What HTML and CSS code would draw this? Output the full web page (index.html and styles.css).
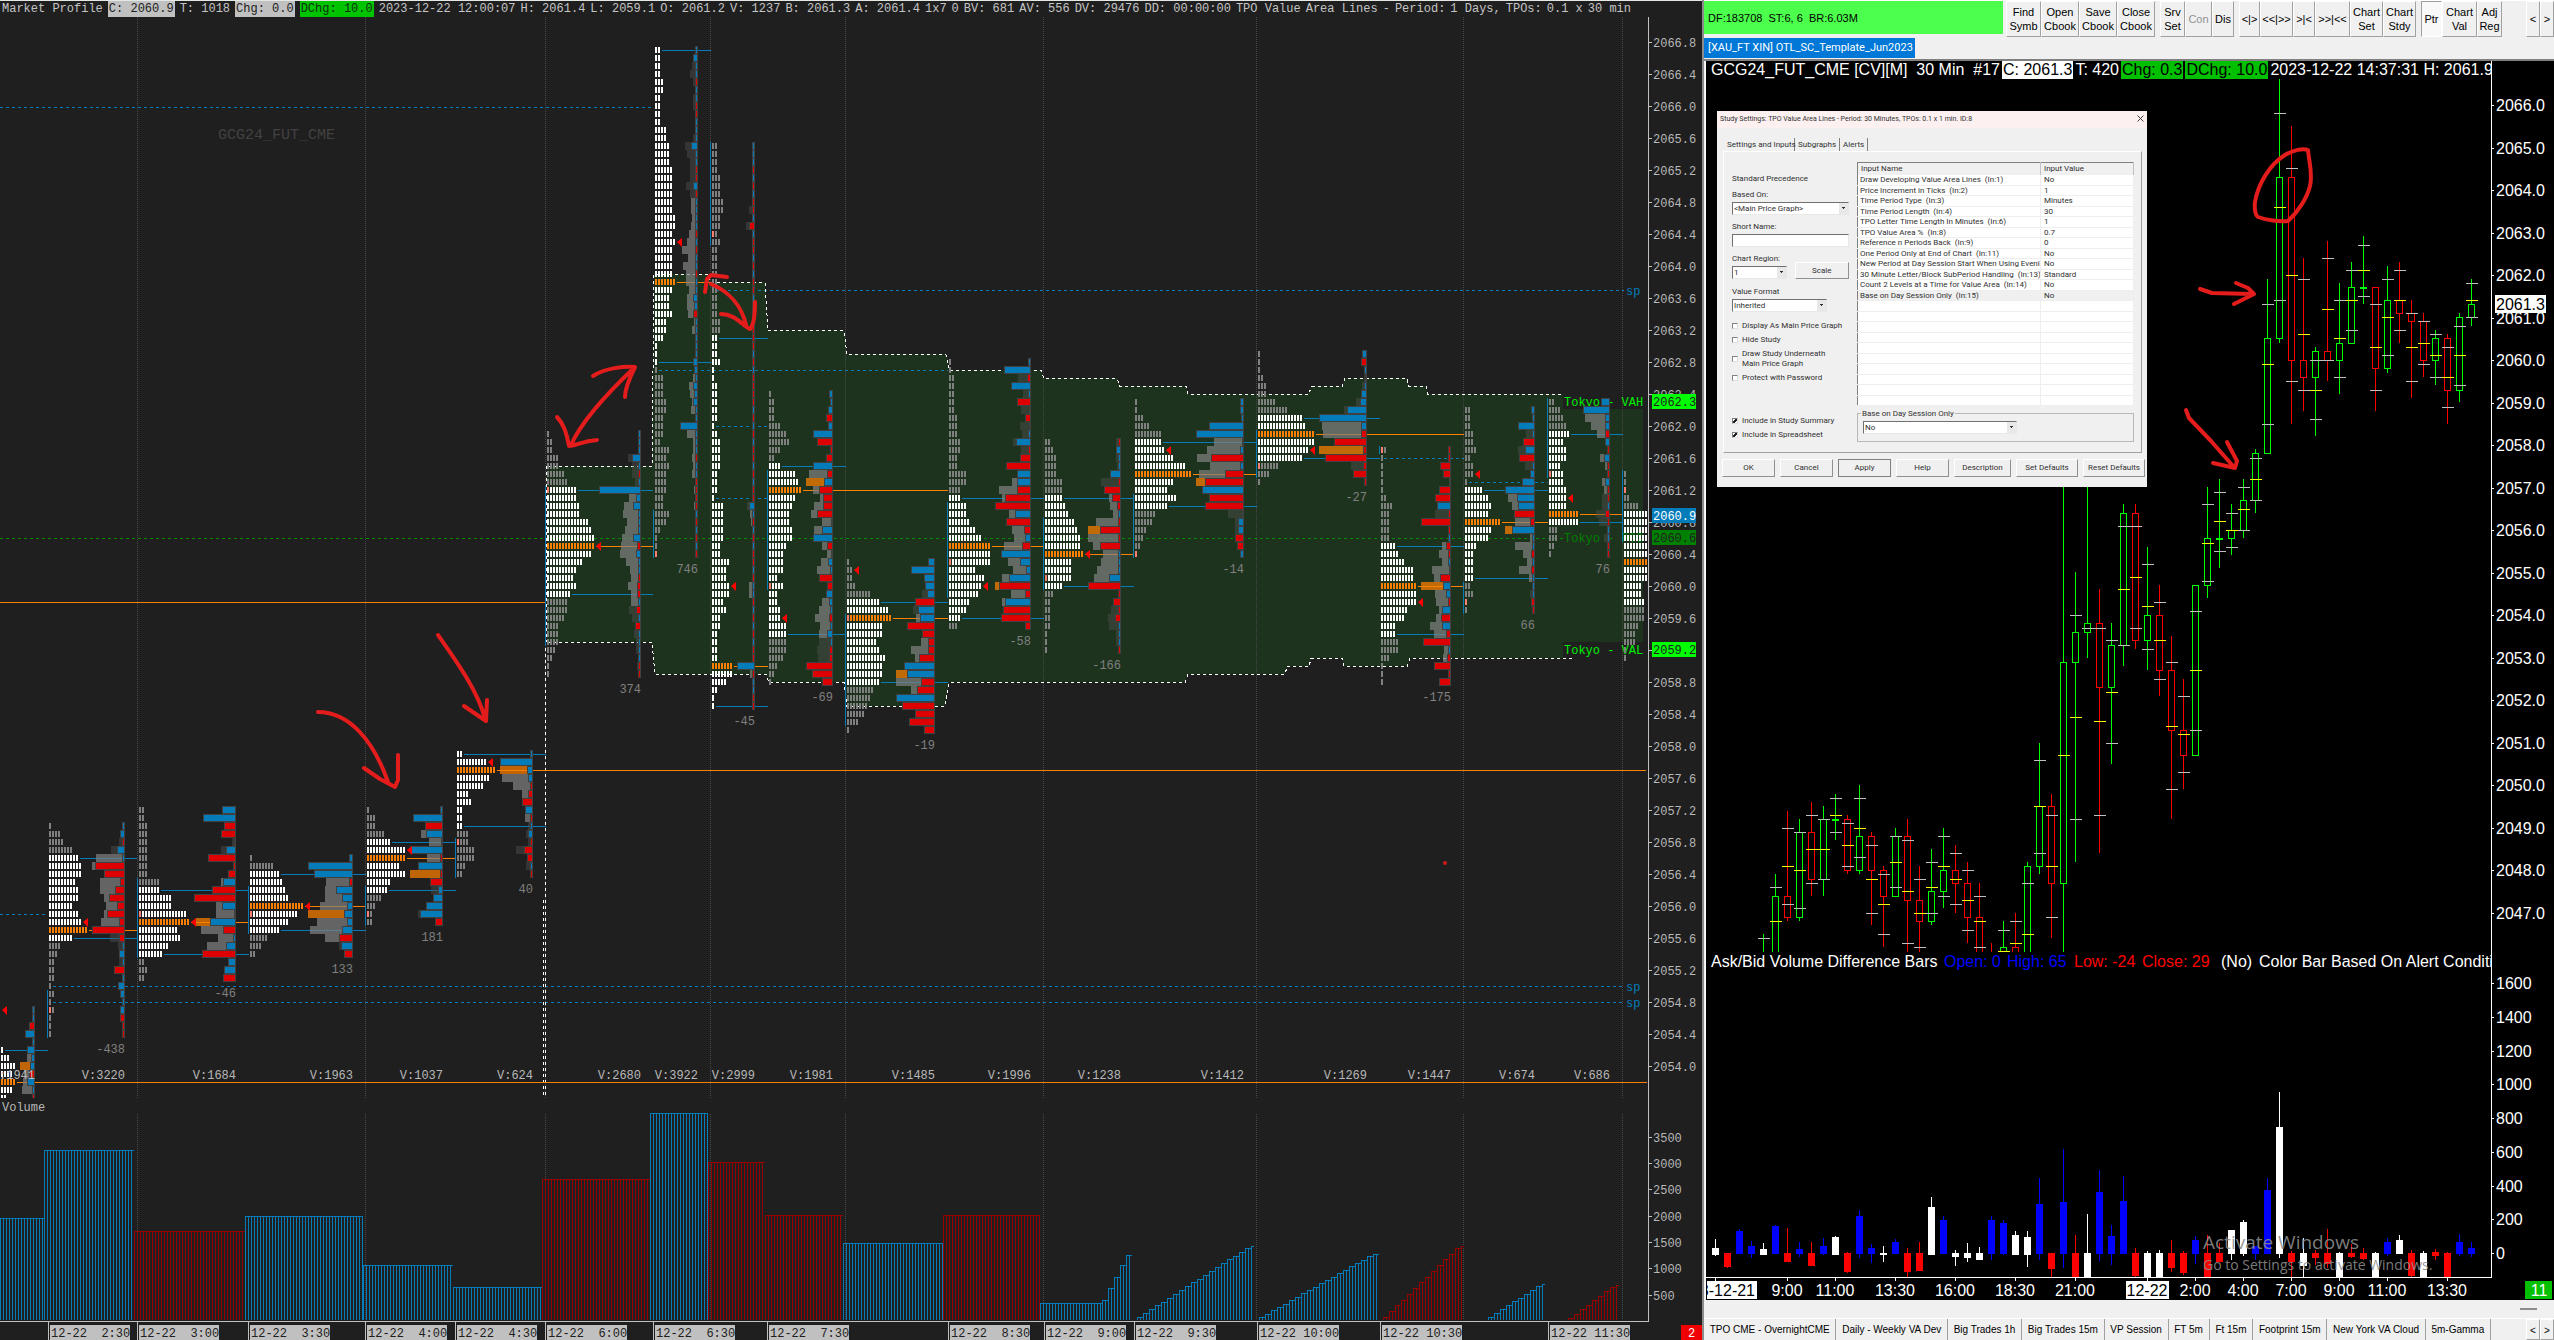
FILE: index.html
```html
<!DOCTYPE html>
<html lang="en">
<head>
<meta charset="utf-8">
<title>Market Profile - GCG24_FUT_CME</title>
<link rel="stylesheet" href="styles.css">
</head>
<body>
<main class="workspace">
  <section class="profile-pane">
    <header class="profile-head">
      <span>Market Profile</span>
      <span class="chip silver">C: 2060.9</span>
      <span>T: 1018</span>
      <span class="chip silver">Chg: 0.0</span>
      <span class="chip green">DChg: 10.0</span>
      <span>2023-12-22 12:00:07</span>
      <span>H: 2061.4</span>
      <span>L: 2059.1</span>
      <span>O: 2061.2</span>
      <span>V: 1237</span>
      <span>B: 2061.3</span>
      <span>A: 2061.4</span>
      <span>1x7</span>
      <span>0</span>
      <span>BV: 681</span>
      <span>AV: 556</span>
      <span>DV: 29476</span>
      <span>DD: 00:00:00</span>
      <span>TPO Value</span>
      <span>Area Lines</span>
      <span>-</span>
      <span>Period:</span>
      <span>1 Days,</span>
      <span>TPOs:</span>
      <span>0.1 x</span>
      <span>30 min</span>
    </header>
    <svg class="profile-chart" id="profile" viewBox="0 17 1702 1323" preserveAspectRatio="xMinYMin meet"></svg>
  </section>

  <section class="side-pane">
    <div class="toolbar">
      <div class="feed">DF:183708&nbsp; ST:6, 6&nbsp; BR:6.03M</div>
      <div class="group">
        <button class="w35">Find<br>Symb</button><button class="w38">Open<br>Cbook</button><button class="w38">Save<br>Cbook</button><button class="w38">Close<br>Cbook</button>
      </div>
      <div class="group">
        <button class="w25">Srv<br>Set</button><button class="w27" disabled>Con</button><button class="w22">Dis</button>
      </div>
      <div class="group">
        <button class="w21">&lt;|&gt;</button><button class="w33">&lt;&lt;|&gt;&gt;</button><button class="w22">&gt;|&lt;</button><button class="w35">&gt;&gt;|&lt;&lt;</button><button class="w33">Chart<br>Set</button><button class="w33">Chart<br>Stdy</button>
      </div>
      <div class="group">
        <button class="w21 pressed">Ptr</button><button class="w35">Chart<br>Val</button><button class="w25">Adj<br>Reg</button>
      </div>
      <div class="group end">
        <button class="w14">&lt;</button><button class="w14">&gt;</button>
      </div>
    </div>
    <div class="window-tabs"><a href="#chart" class="window-tab">[XAU_FT XIN] OTL_SC_Template_Jun2023</a></div>

    <div class="candle-wrap" id="chart">
      <header class="candle-head">
        <span>GCG24_FUT_CME [CV][M]  30 Min  #17</span>
        <span class="chip white">C: 2061.3</span>
        <span>T: 420</span>
        <span class="chip lime">Chg: 0.3</span>
        <span class="chip lime">DChg: 10.0</span>
        <span>2023-12-22 14:37:31 H: 2061.9</span>
      </header>
      <svg class="candle-chart" id="candles" viewBox="1706 79 848 1221" preserveAspectRatio="xMinYMin meet"></svg>

      <form class="dialog">
        <div class="dialog-title"><span>Study Settings: TPO Value Area Lines - Period: 30 Minutes, TPOs: 0.1 x 1 min. ID:8</span>
          <button type="button" class="close" aria-label="Close"><svg viewBox="0 0 7 7"><path d="M.5 .5l6 6m0-6l-6 6"/></svg></button></div>
        <nav class="dialog-tabs"><a href="#inputs" class="on">Settings and Inputs</a><a href="#sub">Subgraphs</a><a href="#alerts">Alerts</a></nav>
        <div class="dialog-page">
          <div class="options">
            <p>Standard Precedence</p>
            <label for="based">Based On:</label>
            <select id="based"><option>&lt;Main Price Graph&gt;</option></select>
            <label for="short">Short Name:</label>
            <input type="text" id="short">
            <label for="region">Chart Region:</label>
            <div class="pair"><select id="region"><option>1</option></select><button type="button">Scale</button></div>
            <label for="format">Value Format</label>
            <select id="format" class="mid"><option>Inherited</option></select>
            <label class="check"><input type="checkbox">Display As Main Price Graph</label>
            <label class="check"><input type="checkbox">Hide Study</label>
            <label class="check two"><input type="checkbox"><span>Draw Study Underneath<br>Main Price Graph</span></label>
            <label class="check"><input type="checkbox">Protect with Password</label>
            <div class="push"></div>
            <label class="check"><input type="checkbox" checked>Include in Study Summary</label>
            <label class="check"><input type="checkbox" checked>Include in Spreadsheet</label>
          </div>
          <div class="inputs">
            <table>
              <thead><tr><th>Input Name</th><th>Input Value</th></tr></thead>
              <tbody id="inputs">
                <tr><td>Draw Developing Value Area Lines &nbsp;(In:1)</td><td>No</td></tr>
                <tr><td>Price Increment in Ticks &nbsp;(In:2)</td><td>1</td></tr>
                <tr><td>Time Period Type &nbsp;(In:3)</td><td>Minutes</td></tr>
                <tr><td>Time Period Length &nbsp;(In:4)</td><td>30</td></tr>
                <tr><td>TPO Letter Time Length In Minutes &nbsp;(In:6)</td><td>1</td></tr>
                <tr><td>TPO Value Area % &nbsp;(In:8)</td><td>0.7</td></tr>
                <tr><td>Reference n Periods Back &nbsp;(In:9)</td><td>0</td></tr>
                <tr><td>One Period Only at End of Chart &nbsp;(In:11)</td><td>No</td></tr>
                <tr><td>New Period at Day Session Start When Using Eveni...</td><td>No</td></tr>
                <tr><td>30 Minute Letter/Block SubPeriod Handling &nbsp;(In:13)</td><td>Standard</td></tr>
                <tr><td>Count 2 Levels at a Time for Value Area &nbsp;(In:14)</td><td>No</td></tr>
                <tr class="sel"><td>Base on Day Session Only &nbsp;(In:15)</td><td>No</td></tr>
                <tr><td></td><td></td></tr><tr><td></td><td></td></tr><tr><td></td><td></td></tr><tr><td></td><td></td></tr><tr><td></td><td></td></tr>
                <tr><td></td><td></td></tr><tr><td></td><td></td></tr><tr><td></td><td></td></tr><tr><td></td><td></td></tr><tr><td></td><td></td></tr>
              </tbody>
            </table>
            <fieldset>
              <legend><label for="base">Base on Day Session Only</label></legend>
              <select id="base"><option>No</option></select>
            </fieldset>
          </div>
        </div>
        <div class="dialog-buttons">
          <button type="button">OK</button><button type="button">Cancel</button><button type="button" class="default">Apply</button><button type="button">Help</button><button type="button" class="wide">Description</button><button type="button" class="wider">Set Defaults</button><button type="button" class="wider">Reset Defaults</button>
        </div>
      </form>
    </div>

    <div class="strip"><span></span></div>
    <nav class="books">
      <a href="#b1">TPO CME - OvernightCME</a><a href="#b2">Daily - Weekly VA Dev</a><a href="#b3">Big Trades 1h</a><a href="#b4">Big Trades 15m</a><a href="#b5">VP Session</a><a href="#b6">FT 5m</a><a href="#b7">Ft 15m</a><a href="#b8">Footprint 15m</a><a href="#b9">New York VA Cloud</a><a href="#b10">5m-Gamma</a>
      <div class="scrollers"><button>&lt;</button><button>&gt;</button></div>
    </nav>
  </section>
</main>
<script src="charts.js"></script>
</body>
</html>
```
FILE: styles.css
```css
* { box-sizing: border-box; }
body { margin: 0; background: #1f1f1f; }
button, input, select { font: inherit; color: inherit; margin: 0; border-radius: 0; }
a { color: inherit; text-decoration: none; }

.workspace { display: grid; grid-template-columns: 1702fr 852fr; min-height: 100vh; }
.profile-pane { background: #1f1f1f; border-top: 1px solid #e4e8e4; min-width: 0; overflow: hidden; font: 12px "Liberation Mono", monospace; }
.profile-head { display: flex; gap: 5px; height: 16px; padding-left: 2px; line-height: 16px; color: #c4c4c4; white-space: nowrap; }
.profile-head span, .candle-head span { flex: none; }
.chip { padding: 0 1px; }
.chip.silver { background: #c0c0c0; color: #202020; }
.chip.green { background: #00c400; color: #103010; }
.profile-chart { display: block; width: 100%; height: auto; }
.profile-chart text { font: 12px "Liberation Mono", monospace; fill: #b8b8b8; white-space: pre; }
.profile-chart .dim { fill: #808080; }
.profile-chart .mark { font-size: 15px; fill: #424242; }
.profile-chart .sp { fill: #047cba; }
.profile-chart .lime { fill: #00f000; }
.profile-chart .forest { fill: #008000; }
.profile-chart .ink { fill: #202020; }
.profile-chart .snow { fill: #ffffff; }
.sketch { fill: none; stroke: #e41c1c; stroke-width: 4; stroke-linecap: round; stroke-linejoin: round; }
.crisp { shape-rendering: crispEdges; }

.side-pane { display: flex; flex-direction: column; min-width: 0; background: #f0f0f0; border-left: 2px solid #8c8c8c; font: 11px "Liberation Sans", sans-serif; color: #000; }
.toolbar { display: flex; height: 37px; border-top: 1px solid #fff; }
.feed { width: 299px; height: 33px; background: #4cff4c; margin-right: 3px; padding-left: 4px; line-height: 34px; font-size: 11px; white-space: nowrap; flex-shrink: 1; }
.group { display: flex; margin-right: 5px; flex: none; }
.group.end { margin: 0 0 0 auto; }
.group button { padding: 0; border: 1px solid; border-color: #fff #a0a0a0 #a0a0a0 #fff; background: #f0f0f0; line-height: 14px; }
.group button:disabled { color: #909090; }
.group .pressed { background: #f8f8f8; border-color: #a0a0a0 #fff #fff #a0a0a0; }
.w14 { width: 14px; } .w21 { width: 21px; } .w22 { width: 22px; } .w25 { width: 25px; } .w27 { width: 27px; }
.w33 { width: 33px; } .w35 { width: 35px; } .w38 { width: 38px; }
.window-tabs { height: 24px; border-bottom: 2px solid #808080; }
.window-tab { display: block; width: 211px; height: 20px; margin-top: 1px; padding-left: 4px; line-height: 20px; font-family: Roboto, sans-serif; background: #0078d7; color: #fff; white-space: nowrap; }

.candle-wrap { position: relative; flex: 1; margin-left: 1px; background: #000; overflow: hidden; border-left: 1px solid #fff; }
.candle-head { display: flex; gap: 2px; height: 18px; margin-right: 62px; padding-left: 5px; border-right: 1px solid #fff; line-height: 18px; font-size: 16px; color: #fff; white-space: pre; overflow: hidden; }
.chip.white { background: #fff; color: #000; }
.chip.lime { background: #00c000; color: #000; }
.candle-chart { display: block; width: 100%; height: auto; }
.candle-chart text { font: 16px "Liberation Sans", sans-serif; fill: #fff; white-space: pre; }
.candle-chart .black { fill: #000; }
.candle-chart .red { fill: #f00; }
.candle-chart .blue { fill: #00f; }
.candle-chart .activate { font: 19px "Open Sans", sans-serif; fill: #8c8c8c; fill-opacity: .9; }
.candle-chart .activate.small { font-size: 14px; }

.strip { height: 18px; padding: 8px 17px 0 0; }
.strip span { display: block; width: 17px; height: 2px; margin-left: auto; background: #8c8c8c; }
.books { display: flex; height: 22px; font-size: 10px; line-height: 22px; white-space: nowrap; border-top: 1px solid #fff; }
.books a { padding: 0 4px; border-right: 1px solid #a0a0a0; flex: 1 1 auto; text-align: center; }
.scrollers { display: flex; margin-left: 35px; }
.scrollers button { width: 14px; padding: 0; border: 1px solid; border-color: #fff #a0a0a0 #a0a0a0 #fff; background: #f0f0f0; }

.dialog { position: absolute; left: 11px; top: 50px; width: 430px; height: 376px; background: #f0f0f0; color: #303030; font: 8px/10px Roboto, sans-serif; display: flex; flex-direction: column; }
.dialog-title { display: flex; justify-content: space-between; height: 17px; padding: 0 3px; line-height: 16px; background: #fcf0f0; font-size: 7px; }
.close { border: 0; background: none; padding: 0; width: 7px; height: 14px; }
.close svg { display: block; width: 7px; height: 7px; stroke: #404040; fill: none; }
.dialog-tabs { display: flex; height: 23px; margin: 0 6px; padding-top: 10px; line-height: 14px; }
.dialog-tabs a { padding: 0 3px; border-right: 1px solid #808080; }
.dialog-tabs .on { width: 72px; padding-left: 4px; white-space: nowrap; }
.dialog-page { display: flex; height: 302px; margin: 0 5px 0 6px; padding: 10px 8px; border: 1px solid; border-color: #fff #a0a0a0 #a0a0a0 #fff; gap: 8px; }
.options { display: flex; flex-direction: column; width: 117px; white-space: nowrap; }
.options p { margin: 12px 0 6px; }
.options > label { height: 12px; }
.options > select, .options > input { margin-bottom: 7px; }
.dialog select, .dialog input[type="text"] { display: block; width: 117px; height: 13px; padding: 0 1px; border: 1px solid; border-color: #707070 #e8e8e8 #e8e8e8 #707070; background: #fff; }
.dialog select { appearance: none; background: linear-gradient(#303030, #303030) right 3px top 4px / 3px 1px no-repeat, linear-gradient(#303030, #303030) right 4px top 5px / 1px 1px no-repeat, linear-gradient(#e8e8e8, #e8e8e8) right 0 top 0 / 9px 11px no-repeat, #fff; }
.pair { display: flex; gap: 8px; height: 19px; margin-bottom: 2px; }
.dialog .pair select { width: 55px; }
.pair button { width: 55px; height: 17px; margin-top: -4px; }
.dialog .mid { width: 95px; }
.dialog button:not(.close) { padding: 0; border: 1px solid; border-color: #fff #909090 #909090 #fff; background: #f0f0f0; }
.options > .check { display: flex; gap: 4px; align-items: center; height: 14px; flex: none; }
.options > .two { height: 24px; }
.check input { appearance: none; width: 6px; height: 6px; border: 1px solid; border-color: #808080 #e0e0e0 #e0e0e0 #808080; background: #fff; flex: none; }
.check input:checked { background: linear-gradient(135deg, #fff 35%, #202020 35%, #202020 75%, #fff 75%); }
.push { flex: 1; }
.inputs { width: 277px; display: flex; flex-direction: column; justify-content: space-between; }
.dialog table { width: 277px; height: 244px; border-collapse: collapse; table-layout: fixed; background: #fff; border: 1px solid; border-color: #808080 #e0e0e0 #e0e0e0 #808080; }
.dialog th { width: 183px; height: 12px; padding: 0 3px; text-align: left; font-weight: normal; background: #f0f0f0; border-right: 1px solid #c0c0c0; }
.dialog th + th { width: auto; }
.dialog td { height: 10px; padding: 0 2px; line-height: 9px; white-space: nowrap; border-right: 1px solid #eee; border-bottom: 1px solid #eee; overflow: hidden; }
.dialog td + td { padding-left: 3px; }
.dialog .sel td { background: #f0f0f0; }
.dialog fieldset { margin: 0; height: 33px; padding: 3px 5px 0; border: 1px solid #b8b8b8; }
.dialog legend { padding: 0 1px; line-height: 9px; margin-left: -2px; }
.dialog fieldset select { width: 154px; }
.dialog-buttons { display: flex; gap: 5px; padding: 6px 2px 0 5px; }
.dialog-buttons button { width: 53px; height: 18px; white-space: nowrap; }
.dialog-buttons .wide { width: 57px; }
.dialog-buttons .wider { width: 62px; }
.dialog .dialog-buttons .default { border-color: #808080; }
```
FILE: charts.js
```js
// ---- helpers -------------------------------------------------------------
const rect = (x, y, w, h, fill) => `<rect x="${x}" y="${y}" width="${w}" height="${h}" fill="${fill}"/>`;
const line = (x1, y1, x2, y2, stroke, dash) =>
  `<path d="M${x1} ${y1}L${x2} ${y2}" stroke="${stroke}" fill="none"${dash ? ` stroke-dasharray="${dash}"` : ''}/>`;
const hline = (x1, x2, y, stroke, dash) => line(x1, y + .5, x2, y + .5, stroke, dash);
const vline = (x, y1, y2, stroke, dash) => line(x + .5, y1, x + .5, y2, stroke, dash);
const text = (x, y, s, cls = '', anchor = 'start') =>
  `<text x="${x}" y="${y}" class="${cls}" text-anchor="${anchor}">${s}</text>`;

const BLUE = '#047cba', RED = '#de0000', ORANGE = '#ff8000', FRAME = '#404040';

// ---- market profile ------------------------------------------------------
// One row is 0.1 of price, 8px high; row 0 is 2066.8.
const rowY = r => 42 + 8 * r;

// rows: "tpoCount,volumeWidth[d=outside value|o=poc],delta" from the top row down
const profiles = [
 {x:1,r0:121,right:35,va:[126,140],poc:130,tri:121,triX:2,end:48,pocEnd:1648,vol:'1941',
  rows:'0,0,3 0,0,3 0,0,-6 0,0,10 0,0,3 1,0,8 3,8,4 5,15o,5 4,11,-6 5,12,8 4,13,3 2,0,-3'},
 {x:49,r0:98,right:125,va:[102,112],poc:111,tri:110,open:121,ib:[119,124],end:137,vol:'3220',delta:'-438',
  rows:'1,0,3 4,0,5 5,6d,-3 8,14d,8 10,29,3 11,33,-30 11,0,-21 9,25,-5 10,25,-10 10,21,-16 8,19,-8 10,21,-18 11,24,-6 13,0,-33 8,15d,-6 4,7d,3 3,0,6 2,6d,3 2,0,-11 2,0,3 1,0,7 2,0,5 1,0,3 2,0,5 1,0,-5 1,0,-3 1,0,-3'},
 {x:139,r0:96,right:236,va:[106,114],poc:110,tri:110,open:109,ib:[105,114],end:249,vol:'1684',delta:'-46',
  rows:'2,0,14 2,0,33 3,0,-12 3,0,-15 3,4d,0 3,15d,10 3,0,-28 3,0,-3 3,0,-8 7,15,13 7,0,-24 11,0,-42 11,20,14 16,20,0 17,40o,26 13,35,-13 14,18,3 10,29,10 8,0,-34 2,0,8 3,0,12 2,0,-13'},
 {x:250,r0:102,right:353,va:[104,111],poc:108,tri:108,open:109,ib:[106,111],end:366,vol:'1963',delta:'133',
  rows:'1,0,4 8,0,45 10,0,39 11,27,-4 12,28,17 13,28,11 18,33,6 16,45o,9 13,36,6 10,43,11 6,28,-14 4,14d,12 2,0,-9'},
 {x:367,r0:96,right:443,va:[100,106],poc:102,tri:101,open:109,ib:[106,110],end:456,vol:'1037',delta:'181',
  rows:'1,0,3 3,0,30 3,0,-18 6,22,17 8,14,0 13,0,33 13,16,-3 11,0,25 13,33o,-3 8,0,-13 7,12d,5 5,0,10 3,0,17 2,25d,23 2,0,-8'},
 {x:457,r0:89,right:533,va:[89,98],poc:91,tri:90,open:100,ib:[100,104],end:546,pocEnd:1646,vol:'624',delta:'40',
  rows:'2,0,3 10,0,33 13,33o,6 11,31,5 9,20,-3 4,11,-5 5,0,-11 2,0,8 2,8,-3 2,5d,3 4,7d,5 4,5d,-3 6,17d,-9 6,0,-6 3,7d,3 2,0,-3'},
 {x:547,r0:49,right:641,va:[56,69],poc:63,tri:63,open:56,ib:[56,75],end:653,vol:'2680',delta:'374',
  rows:'1,0,3 2,0,3 2,0,3 4,13d,9 4,9d,3 6,9d,-3 7,6d,3 10,0,42 10,12,5 11,17,8 11,18,3 14,14,3 15,16,3 16,19,8 16,20,-4 15,21,5 12,15,3 10,11,3 9,10,-3 10,13,-4 8,10,-4 7,10,3 7,12d,-5 6,9d,3 4,0,-6 4,7d,3 4,5d,3 3,5d,3 2,0,3 1,4d,-3 1,0,-3'},
 {x:655,r0:1,right:698,va:[1,40],poc:30,tri:25,open:64,ib:[59,64],end:711,vol:'3922',delta:'746',
  rows:'2,0,3 2,0,5 2,6d,3 2,8d,3 3,5d,-3 3,0,3 2,5d,3 2,5d,-3 2,0,-3 2,0,3 4,0,3 4,5d,3 5,13d,7 5,11d,3 5,8d,3 6,8d,-3 6,8d,-3 6,12d,5 6,8d,-3 6,7,3 6,7,3 7,6,3 7,7,3 6,9,-3 7,11,3 6,16,-3 6,10,3 6,15,3 6,12,-3 7,12,3 6,9,3 5,11,5 5,11,4 6,10,-5 4,4,3 4,6,3 3,0,3 1,0,3 1,0,3 1,0,5 1,0,4 3,5,3 3,9,5 3,8,4 4,6,5 4,7,3 3,0,3 3,0,18 3,11,3 2,5,3 5,5,3 4,6,-3 5,5,3 4,6,3 4,0,-3 4,4,-3 3,0,-3 3,4,-3 5,0,3 4,0,-3 2,0,3 1,0,-3 1,0,3 1,0,-3'},
 {x:712,r0:13,right:755,va:[37,83],poc:78,tri:68,open:24,ib:[13,25],end:768,vol:'2999',delta:'-45',
  rows:'2,0,3 2,0,3 2,0,3 2,0,-3 3,0,3 3,0,-3 3,0,3 4,0,-3 4,6d,-3 3,0,3 3,9d,-6 2,0,3 3,0,-3 2,0,-3 2,0,3 2,0,-3 2,0,3 2,0,-3 2,0,-3 2,0,3 2,0,-3 2,0,3 3,0,-3 3,0,-3 2,0,-3 2,0,-3 2,0,3 3,0,-3 1,0,3 1,0,-3 2,0,-3 2,0,-3 2,0,-3 2,0,3 2,0,-3 1,0,3 2,0,-3 3,0,3 3,0,-3 3,0,-3 3,0,3 2,0,-3 2,0,3 2,0,-3 1,0,-3 4,8d,6 4,5,3 4,4,-3 4,0,3 4,0,-3 3,0,3 3,0,-3 6,0,-3 5,0,3 5,0,-3 6,6,3 6,6,3 4,0,-3 5,0,3 3,0,-3 3,0,3 2,0,-3 2,0,3 2,0,-3 2,0,-3 7,0,18 7,5,-3 5,0,3 2,0,3 1,0,-3 1,0,-3'},
 {x:769,r0:44,right:833,va:[53,74],poc:56,tri:72,open:68,ib:[54,68],end:846,pocEnd:948,vol:'1981',delta:'-69',
  rows:'1,0,4 2,0,3 2,0,5 2,0,-7 4,0,5 6,0,20 7,0,-16 4,0,-3 2,0,-7 4,0,20 9,24,-6 10,27o,9 11,20,-14 9,13,-10 8,19,-10 7,22,-16 7,11,0 8,19,11 8,0,20 6,11,-6 5,6,0 5,12,5 5,16,3 3,0,-14 5,0,-6 3,0,7 3,11,4 4,14,3 4,18,-4 6,13,3 6,14,6 6,14d,3 6,16d,-4 5,15d,-4 3,0,-27 2,0,-21 1,0,-11'},
 {x:847,r0:65,right:935,va:[70,80],poc:72,tri:66,open:72,ib:[72,85],end:948,vol:'1485',delta:'-19',
  rows:'1,0,7 2,0,24 2,0,11 3,0,10 8,13d,8 11,0,-20 14,22d,17 15,19,15 12,0,-28 12,0,-13 10,14,-7 11,24,-7 13,20,-16 12,0,31 12,39o,28 11,39,-14 9,24,-18 8,0,39 7,0,-33 6,0,-20 4,0,-26 1,0,-11'},
 {x:949,r0:40,right:1031,va:[57,72],poc:63,tri:68,open:65,ib:[58,69],end:1044,vol:'1996',delta:'-58',
  rows:'1,0,3 1,0,27 2,13d,-4 2,0,20 2,8d,3 2,0,-14 2,10d,0 3,0,-6 3,11d,0 3,9d,3 4,18d,15 4,10d,-3 3,0,-11 3,0,-25 6,0,14 6,19,14 4,32,-14 4,29,-26 6,0,-36 6,22,16 7,0,-25 9,19,-7 11,17,6 14,27,-9 14,0,30 14,23,11 9,18,5 12,29,22 11,36o,-32 10,20,-6 7,29,26 6,0,-28 4,0,-30 3,0,-6'},
 {x:1045,r0:50,right:1121,va:[57,68],poc:64,tri:64,open:67,ib:[60,68],end:1134,vol:'1238',delta:'-166',
  rows:'2,5d,-3 3,0,5 4,5d,3 4,4d,3 4,0,11 6,20d,-3 6,0,-17 6,12,-9 7,11,-4 8,8,3 10,25,-3 11,33o,-21 12,33,-3 12,28,-21 13,18,3 9,20,3 9,24,3 9,27,12 6,0,-33 3,0,-3 2,0,-8 2,10d,-3 2,13d,-6 2,12d,3 1,5d,3 1,5d,3 1,0,-3'},
 {x:1135,r0:45,right:1244,va:[50,58],poc:54,tri:51,open:64,ib:[57,64],end:1257,vol:'1412',delta:'-14',
  rows:'1,0,4 1,0,4 3,0,3 5,0,35 9,0,48 9,30,0 10,37,4 13,47,-33 17,34,4 19,45,-19 13,48o,-39 11,0,42 14,0,-35 11,0,-39 7,16d,0 6,9d,6 4,9d,6 3,0,-9 2,0,-7 1,0,4'},
 {x:1258,r0:39,right:1367,va:[47,52],poc:49,tri:51,open:53,ib:[49,54],end:1380,pocEnd:1464,vol:'1269',delta:'-27',
  rows:'1,0,5 1,0,-6 1,0,3 2,3d,0 3,5d,3 3,0,6 6,11d,7 10,23d,20 15,0,48 16,45,6 19,44,-6 19,0,-33 17,48o,-4 15,0,-42 7,16d,-4 4,0,-14 1,0,-3'},
 {x:1381,r0:51,right:1451,va:[63,74],poc:68,tri:70,open:51,ib:[51,51],end:1464,vol:'1447',delta:'-175',
  rows:'2,0,-3 1,0,-3 1,0,-11 1,0,-8 1,0,0 1,0,-12 2,0,-16 4,0,14 3,16d,-3 3,0,-30 3,0,-3 3,0,3 5,9,-5 6,12,-3 8,9,3 11,19,0 11,17,-11 12,30o,8 12,16,5 12,15,-3 9,12,9 8,15,-10 5,21,9 5,17,-5 6,0,-28 6,7,3 3,8,-4 1,0,-17 1,0,-3 1,0,-12'},
 {x:1465,r0:46,right:1535,va:[56,67],poc:60,tri:54,open:70,ib:[68,71],end:1548,vol:'674',delta:'66',
  rows:'2,0,4 2,0,3 2,0,17 3,9d,3 3,0,-12 4,17d,10 2,0,-16 3,10d,3 3,0,5 1,0,13 6,0,30 8,27,18 9,23,17 8,0,-21 12,20,-5 9,30o,23 8,5,3 4,20,3 3,12,-4 3,8,3 3,16,-4 3,6,3 2,0,3 3,5d,3 1,0,-4 1,0,-3'},
 {x:1549,r0:45,right:1610,va:[49,60],poc:59,tri:57,open:54,ib:[45,54],end:1623,vol:'686',delta:'76',
  rows:'2,0,9 4,0,27 5,25,5 6,19,5 7,13,-5 5,0,5 6,0,-3 6,10,6 4,5,-3 5,0,-3 5,8,5 6,6,-3 6,8d,-3 6,8d,3 10,14d,-5 10,11d,-3 3,0,3 3,6d,3 2,0,-3 1,0,-3'},
 {x:1624,r0:54,va:[59,70],poc:65,open:56,ib:[54,62],end:1624,
  rows:'1,0,0 1,0,0 1,0,0 2,0,0 5,0,0 8,0,0 8,0,0 8,0,0 8,0,0 8,0,0 8,0,0 8,0,0 8,0,0 8,0,0 6,0,0 6,0,0 7,0,0 7,0,0 7,0,0 5,0,0 4,0,0 4,0,0 1,0,0 1,0,0'},
];

const vah = 'M547 466H652L654 274H708L711 282H765L768 330H844L847 354H946L949 370H1041L1044 378H1117L1120 386H1186L1188 394H1308L1312 386H1342L1345 378H1407L1409 386H1426L1428 394H1563';
const valPath = 'M547 642H652L655 674H766L769 682H844L847 706H945L949 682H1185L1188 674H1285L1287 666H1309L1311 658H1342L1344 666H1407L1410 658H1574';

function drawProfile() {
  let s = '';
  // value area shading
  s += `<path class="crisp" fill="#1e331e" d="${vah}H1643V658H1410L1407 666H1344L1342 658H1311L1309 666H1287L1285 674H1188L1185 682H949L945 706H847L844 682H769L766 674H655L652 642H547Z"/>`;
  s += rect(1563, 394, 80, 15, '#1f1f1f') + rect(1563, 642, 80, 16, '#1f1f1f');
  // day separators
  for (const x of [137, 365, 545, 710, 845, 1043, 1256, 1463, 1622])
    s += vline(x, 17, 1098, '#484848', '1 1') + vline(x, 1114, 1320, '#484848', '1 1');
  s += text(218, 139, 'GCG24_FUT_CME', 'mark');
  // carried levels
  s += hline(0, 654, 107, BLUE, '3 3') + hline(0, 48, 914, BLUE, '3 3') + hline(53, 1624, 986, BLUE, '3 3') + hline(53, 1624, 1002, BLUE, '3 3');
  s += hline(716, 1624, 290, BLUE, '3 3') + hline(659, 948, 370, BLUE, '3 3') + hline(716, 768, 426, BLUE, '3 3') + hline(716, 768, 498, BLUE, '3 3');
  s += hline(1384, 1464, 458, BLUE, '3 3') + hline(1469, 1548, 482, BLUE, '3 3');
  s += hline(0, 1563, 538, '#008a00', '3 3') + hline(0, 545, 602, ORANGE);
  s += text(1626, 295, 'sp', 'sp') + text(1626, 991, 'sp', 'sp') + text(1626, 1007, 'sp', 'sp');
  s += text(1564, 406, 'Tokyo - VAH', 'lime') + text(1564, 542, 'Tokyo - POC', 'forest') + text(1564, 654, 'Tokyo - VAL', 'lime');
  s += `<path class="crisp" d="${vah}" fill="none" stroke="#fff" stroke-dasharray="3 3" transform="translate(0 .5)"/>`;
  s += `<path class="crisp" d="${valPath}" fill="none" stroke="#fff" stroke-dasharray="3 3" transform="translate(0 .5)"/>`;
  s += vline(545, 642, 1098, '#fff', '3 3') + vline(543, 900, 1098, '#fff', '3 3') + vline(546, 466, 642, '#fff', '3 3');

  const tpo = { '#ffffff': '', '#808080': '', [ORANGE]: '', '#fa8072': '' };
  let lines = '', bars = '', marks = '', labels = '';
  for (const p of profiles) {
    const rows = p.rows.split(' ').map(t => t.split(','));
    const counts = {};
    rows.forEach(([n, v, d], i) => {
      const r = p.r0 + i, y = rowY(r);
      counts[r] = +n;
      const base = r === p.poc ? ORANGE : (r >= p.va[0] && r <= p.va[1]) ? '#ffffff' : '#808080';
      for (let k = 0; k < n; k++) {
        const c = k === 0 && r === p.open ? '#fa8072' : base;
        tpo[c] += `M${p.x + 3 * k} ${y - 3}h2v6h-2z`;
      }
      if (!p.right) return;
      const vw = parseInt(v), dw = Math.abs(+d);
      if (vw) {
        const fill = v.endsWith('o') ? 'rgba(255,128,0,.72)' : v.endsWith('d') ? 'rgba(80,80,80,.45)' : 'rgba(128,128,128,.71)';
        bars += rect(p.right - vw, y - 4, vw - Math.max(dw, 2), 8, fill);
      }
      bars += rect(p.right - Math.max(dw, 2), y - 4, Math.max(dw, 2), 8, FRAME);
      if (dw) bars += rect(p.right - dw + 1, y - 3, dw - 2, 6, d > 0 ? BLUE : RED);
    });
    for (const r of p.va) if (counts[r] && p.right) lines += hline(p.x + 3 * counts[r] + 1, p.end, rowY(r), BLUE);
    if (p.right) lines += hline(p.x + 3 * counts[p.poc] + 1, p.pocEnd || p.end, rowY(p.poc), ORANGE);
    if (p.ib) lines += vline(p.x - 2, rowY(p.ib[0]) - 4, rowY(p.ib[1]) + 4, BLUE);
    if (p.tri) {
      const tx = p.triX || p.x + 3 * counts[p.tri] + 1, ty = rowY(p.tri);
      marks += `<path d="M${tx} ${ty}l5 -4v9z" fill="#f00"/>`;
    }
    if (p.delta) labels += text(p.right, rowY(p.r0 + rows.length - 1) + 19, p.delta, 'dim', 'end');
    if (p.vol) labels += text(p.right, 1079, 'V:' + p.vol, '', 'end');
  }
  s += `<g class="crisp" clip-path="url(#plot)">${lines}`;
  for (const c in tpo) s += `<path fill="${c}" d="${tpo[c]}"/>`;
  s += `${bars}</g>${marks}${labels}`;

  // volume study
  s += text(2, 1111, 'Volume');
  const DRED = '#960000';
  const steps = [[0,44,1218,BLUE],[44,134,1150,BLUE],[134,245,1231,DRED],[245,363,1216,BLUE],[363,453,1265,BLUE],[453,542,1287,BLUE],
    [542,650,1179,DRED],[650,708,1113,BLUE],[708,765,1162,DRED],[765,843,1215,DRED],[843,943,1243,BLUE],[943,1040,1215,DRED]];
  // volume that is still building up: [from, to, firstY, lastY, colour, step width]
  const ramps = [[1040,1102,1303,1303,BLUE,62],[1102,1131,1300,1255,BLUE,6],[1137,1254,1317,1246,BLUE,6],[1259,1377,1317,1254,BLUE,6],
    [1383,1463,1317,1246,DRED,6],[1488,1545,1317,1284,BLUE,6],[1568,1618,1318,1285,DRED,6]];
  let v = '';
  for (const [a, b, y, c] of steps) {
    let d = `M${a} ${y + .5}H${b}`;
    for (let x = a; x < b; x += 3) d += `M${x + .5} ${y}V1320`;
    v += `<path d="${d}" stroke="${c}" fill="none"/>`;
  }
  for (const [a, b, y0, y1, c, w] of ramps) {
    let d = '';
    for (let x = a; x < b; x += 3) {
      const q = Math.floor((x - a) / w) * w;
      const y = Math.round(y0 + (y1 - y0) * Math.min(1, q / (b - a - w || 1)));
      d += `M${x} ${y + .5}h3M${x + .5} ${y}V1320`;
    }
    v += `<path d="${d}" stroke="${c}" fill="none"/>`;
  }
  s += `<g class="crisp">${v}</g>`;

  // price scale
  s += vline(1648, 17, 1321, '#c0c0c0') + hline(0, 1649, 1321, '#c0c0c0');
  for (let i = 0; i <= 32; i++) {
    const y = 42 + 32 * i;
    s += hline(1649, 1652, y, '#c0c0c0') + text(1653, y + 5, (2066.8 - .4 * i).toFixed(1));
  }
  for (let i = 1; i <= 7; i++) {
    const y = Math.round(1321 - 26.35 * i);
    s += hline(1649, 1652, y, '#c0c0c0') + text(1653, y + 5, 500 * i);
  }
  const tag = (y, bg, label, cls) => rect(1652, y, 44, 15, bg) + text(1653, y + 12, label, cls);
  s += tag(394, '#00ff00', '2062.3', 'ink') + tag(508, BLUE, '2060.9', 'snow') + tag(530, '#008000', '2060.6', 'ink') + tag(642, '#00ff00', '2059.2', 'ink');

  // time scale
  const times = [[48,' 2:30'],[137,' 3:00'],[248,' 3:30'],[365,' 4:00'],[455,' 4:30'],[545,' 6:00'],[653,' 6:30'],[767,' 7:30'],
    [948,' 8:30'],[1044,' 9:00'],[1134,' 9:30'],[1257,'10:00'],[1380,'10:30'],[1548,'11:30']];
  for (const [x, t] of times)
    s += vline(x, 1322, 1340, '#c0c0c0') + rect(x + 2, 1325, 80, 15, '#c0c0c0') + text(x + 3, 1337, '12-22 ' + t, 'ink');
  s += rect(1681, 1325, 21, 15, '#f00000') + text(1688, 1337, '2', 'snow');

  // hand-drawn arrows
  s += `<g class="sketch">
    <path d="M318 712C350 712 374 742 388 782M364 768L380 779L395 787L398 780V755"/>
    <path d="M438 635C452 655 478 690 485 719M464 706L486 721L487 700"/>
    <path d="M571 445C580 425 600 400 635 367M557 417C565 425 568 440 569 446C576 446 582 441 597 440M593 376C605 368 625 366 635 367C630 377 625 388 625 397"/>
    <path d="M711 284C730 292 742 307 746 325M727 277L711 275L707 279L705 292M721 314C735 314 742 325 750 329C754 325 755 315 755 302"/>
  </g><circle cx="1445" cy="863" r="2" fill="#d01818"/>`;
  return `<defs><clipPath id="plot"><path d="M0 17H1647V1098H0z"/></clipPath></defs>` + s;
}

// ---- candles -------------------------------------------------------------
// [slot, g/r, high, bodyTop, bodyBottom, low, [outer marks], middle mark]
const candles = [
 [-43,'g',934,0,0,952,[938],0],[-42,'g',874,896,960,960,[887],921],[-41,'r',811,896,917,921,[828,904],866],[-40,'g',819,832,917,921,[832,908],870],
 [-39,'r',802,832,879,896,[815,883],849],[-38,'g',806,819,879,896,[819,879],849],[-37,'g',794,819,820,840,[798,832],815],[-36,'r',815,819,870,874,[823,866],845],
 [-35,'g',785,836,870,874,[798,857],828],[-34,'r',832,836,870,925,[845,913],879],[-33,'r',866,870,896,947,[874,934],904],[-32,'g',828,836,896,896,[836,887],862],
 [-31,'r',819,836,900,952,[840,943],891],[-30,'r',866,900,921,952,[879,947],913],[-29,'g',849,891,921,925,[862,913],887],[-28,'g',828,870,891,908,[836,896],866],
 [-27,'r',845,870,883,913,[853,904],879],[-26,'r',862,883,917,943,[870,930],900],[-25,'r',883,917,960,960,[896,947],921],[-24,'r',943,0,0,952,[],0],
 [-23,'g',921,947,960,960,[930],951],[-22,'r',913,947,960,960,[921],943],[-21,'g',862,866,960,960,[883],934],[-20,'g',743,806,866,874,[760,853],806],
 [-19,'r',794,806,883,938,[815,917],866],[-18,'g',440,662,883,952,[],755],[-17,'g',572,632,662,862,[615,819],717],[-16,'g',440,623,632,658,[628],0],
 [-15,'r',589,623,687,853,[628,815],721],[-14,'g',623,645,687,764,[640,743],692],[-13,'g',504,513,645,666,[526,645],589],[-12,'r',504,513,640,649,[526,628],577],
 [-11,'g',547,615,640,670,[564,649],606],[-10,'r',585,615,670,696,[602,679],640],[-9,'r',636,670,730,819,[662,789],726],[-8,'r',679,730,755,789,[696,772],734],
 [-7,'g',585,585,755,755,[611,730],670],[-6,'g',487,538,585,598,[504,581],543],[-5,'g',479,538,539,568,[492,551],521],[-4,'g',504,530,538,555,[513,547],530],
 [-3,'g',479,500,530,538,[487,530],509],[-2,'g',449,453,500,513,[458,500],479],[-1,'g',279,338,453,453,[304,424],364],[0,'g',79,177,338,343,[113,300],207],
 [1,'r',126,177,360,424,[168,381],275],[2,'r',258,360,377,411,[279,390],334],[3,'g',347,351,377,436,[360,419],390],[4,'r',241,351,360,381,[258,360],309],
 [5,'g',283,343,360,394,[300,377],338],[6,'g',262,287,343,343,[270,330],300],[7,'g',236,287,288,304,[245,296],270],[8,'r',287,287,368,411,[304,390],347],
 [9,'g',266,300,368,373,[279,355],317],[10,'r',262,300,313,343,[270,330],300],[11,'r',300,313,321,398,[313,381],347],[12,'r',313,321,360,377,[321,364],343],
 [13,'g',330,338,360,385,[334,377],355],[14,'r',334,338,390,424,[347,407],377],[15,'g',313,317,390,402,[326,385],355],[16,'g',279,304,317,326,[283,317],300],
];
// [slot, w/b/r, high, bodyTop, bodyBottom, low] for the difference bars
const diffs = [
 [-47,'w',1239,1248,1254,1256],[-46,'r',1253,1253,1266,1268],[-45,'b',1229,1231,1253,1253],[-44,'b',1241,1246,1253,1258],[-43,'w',1243,1249,1254,1254],
 [-42,'b',1225,1226,1253,1253],[-41,'r',1228,1253,1261,1261],[-40,'b',1242,1249,1253,1257],[-39,'r',1242,1253,1265,1266],[-38,'b',1238,1246,1253,1255],
 [-37,'w',1236,1237,1254,1254],[-36,'r',1252,1253,1271,1273],[-35,'b',1210,1216,1253,1258],[-34,'b',1244,1248,1253,1263],[-33,'w',1246,1253,1254,1262],
 [-32,'b',1239,1242,1253,1253],[-31,'r',1248,1253,1271,1277],[-30,'r',1242,1253,1270,1271],[-29,'w',1197,1207,1254,1254],[-28,'b',1216,1220,1253,1253],
 [-27,'w',1250,1253,1256,1266],[-26,'w',1243,1253,1257,1262],[-25,'w',1247,1253,1259,1259],[-24,'b',1216,1220,1253,1260],[-23,'b',1220,1223,1253,1255],
 [-22,'w',1231,1235,1254,1255],[-21,'w',1231,1237,1254,1267],[-20,'b',1178,1204,1253,1260],[-19,'r',1253,1253,1268,1277],[-18,'b',1149,1202,1253,1268],
 [-17,'r',1235,1253,1277,1277],[-16,'w',1214,1253,1277,1277],[-15,'b',1170,1192,1253,1261],[-14,'b',1225,1236,1253,1265],[-13,'b',1176,1201,1253,1253],
 [-12,'r',1248,1253,1275,1277],[-11,'w',1251,1253,1277,1277],[-10,'w',1250,1253,1277,1277],[-9,'r',1240,1253,1267,1272],[-8,'r',1251,1253,1272,1275],
 [-7,'b',1236,1240,1253,1264],[-6,'r',1235,1253,1277,1277],[-5,'r',1243,1253,1261,1261],[-4,'w',1230,1230,1253,1260],[-3,'w',1220,1222,1253,1256],
 [-2,'b',1246,1246,1253,1260],[-1,'b',1178,1190,1253,1253],[0,'w',1092,1127,1253,1258],[1,'r',1251,1253,1261,1277],[2,'w',1238,1253,1265,1277],
 [3,'r',1250,1253,1257,1265],[4,'r',1229,1253,1263,1268],[5,'w',1252,1253,1277,1277],[6,'r',1244,1253,1256,1258],[7,'r',1248,1253,1258,1260],
 [8,'w',1252,1253,1277,1277],[9,'b',1238,1242,1253,1256],[10,'w',1235,1240,1253,1253],[11,'r',1250,1253,1275,1277],[12,'w',1251,1253,1277,1277],
 [13,'r',1249,1252,1255,1260],[14,'r',1252,1253,1277,1277],[15,'b',1234,1242,1253,1256],[16,'b',1242,1248,1253,1257],
];

function drawCandles() {
  const slotX = k => 2279 + 12 * k;
  let s = '<defs><clipPath id="upper"><path d="M1706 79H2491V952H1706z"/></clipPath><clipPath id="label"><path d="M1707 952H2491V1300H1707z"/></clipPath></defs>';
  s += '<g class="crisp" clip-path="url(#upper)">';
  for (const [k, c, hi, top, bot, lo, outer, mid] of candles) {
    const x = slotX(k), col = c === 'g' ? '#00ff00' : '#ff0000';
    if (!top) s += vline(x, hi, lo, col);
    else {
      s += vline(x, hi, top, col) + vline(x, bot, lo, col);
      s += `<rect x="${x - 3 + .5}" y="${top + .5}" width="6" height="${bot - top}" fill="#000" stroke="${col}"/>`;
    }
    for (const m of outer) s += hline(x - 5, x + 7, m, '#c0c0c0');
    if (mid) s += hline(x - 5, x + 7, mid, '#ffff00');
  }
  s += '</g><g class="crisp">';
  const colors = { w: '#ffffff', b: '#0000ff', r: '#ff0000' };
  for (const [k, c, hi, top, bot, lo] of diffs) {
    const x = slotX(k), col = colors[c];
    s += vline(x, hi, lo, col) + rect(x - 3, top, 7, bot - top + 1, col);
  }
  s += '</g>';

  s += text(1711, 967, 'Ask/Bid Volume Difference Bars') + text(1944, 967, 'Open: 0', 'blue') + text(2007, 967, 'High: 65', 'blue');
  s += text(2074, 967, 'Low: -24', 'red') + text(2142, 967, 'Close: 29', 'red') + text(2221, 967, '(No)');
  s += `<g clip-path="url(#label)">${text(2259, 967, 'Color Bar Based On Alert Condition')}</g>`;

  // scales
  s += vline(2491, 79, 1278, '#fff') + hline(1706, 2491, 1277, '#fff');
  for (let i = 0; i < 20; i++) {
    const y = Math.round(105 + 42.5 * i);
    s += hline(2491, 2494, y, '#fff') + text(2496, y + 6, (2066 - i).toFixed(1));
  }
  s += rect(2495, 295, 51, 18, '#fff') + text(2496, 310, '2061.3', 'black');
  for (let v = 0; v <= 1600; v += 200) {
    const y = Math.round(1253 - v * .16875);
    s += hline(2491, 2494, y, '#fff') + text(2496, y + 6, v);
  }
  const times = [[-41,'9:00'],[-37,'11:00'],[-32,'13:30'],[-27,'16:00'],[-22,'18:30'],[-17,'21:00'],[-7,'2:00'],[-3,'4:00'],[1,'7:00'],[5,'9:00'],[9,'11:00'],[14,'13:30']];
  for (const [k, t] of times) s += vline(slotX(k), 1278, 1281, '#fff') + text(slotX(k), 1296, t, '', 'middle');
  s += vline(1715, 1278, 1281, '#fff') + vline(slotX(-11), 1278, 1281, '#fff');
  s += rect(1707, 1281, 50, 18, '#fff') + `<g clip-path="url(#label)">${text(1755, 1296, '2023-12-21', 'black', 'end')}</g>`;
  s += rect(2126, 1281, 43, 18, '#fff') + text(2147, 1296, '12-22', 'black', 'middle');
  s += rect(2525, 1281, 27, 18, '#00c000') + text(2539, 1296, '11', '', 'middle');

  s += text(2203, 1249, 'Activate Windows', 'activate') + text(2203, 1270, 'Go to Settings to activate Windows.', 'activate small');

  s += `<g class="sketch">
    <path d="M2308 150C2303 148 2293 150 2285 155C2270 164 2258 184 2255 202C2254 210 2256 216 2258 217C2266 220 2280 222 2288 221C2298 212 2307 198 2310 186C2313 174 2309 162 2308 150Z"/>
    <path d="M2200 289L2212 293L2252 294M2236 283L2248 288L2254 294L2234 304"/>
    <path d="M2186 410L2189 418L2211 441L2233 466M2213 463L2235 468L2237 461L2227 442"/>
  </g>`;
  return s;
}

document.getElementById('profile').innerHTML = drawProfile();
document.getElementById('candles').innerHTML = drawCandles();
```
